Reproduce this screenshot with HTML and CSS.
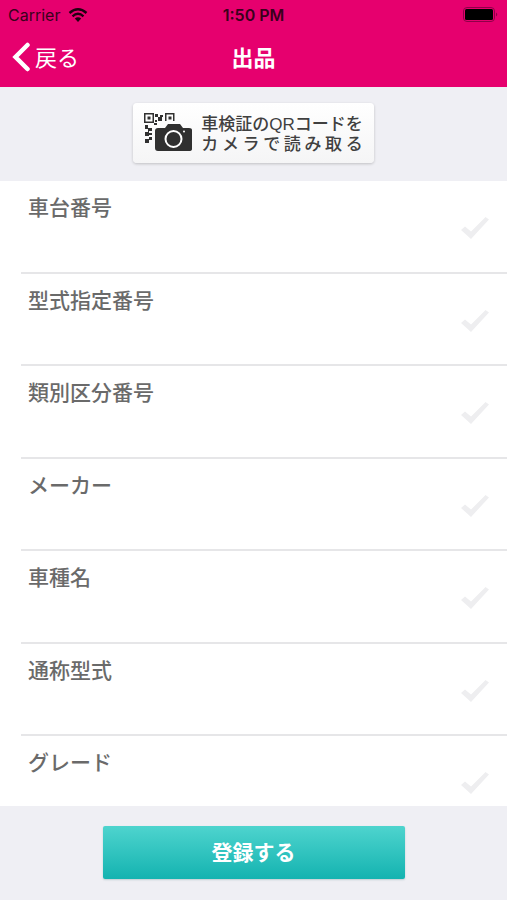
FILE: index.html
```
<!DOCTYPE html>
<html lang="ja">
<head>
    <meta charset="UTF-8">
    <title>出品</title>
    <meta name="viewport" content="width=device-width, initial-scale=1.0">
    <link rel="stylesheet" href="styles.css">
</head>
<body>
    <svg class="symbols" aria-hidden="true">
        <symbol id="check" viewBox="0 0 30 24">
            <path d="M1 14 L5 10.500 L11 15.500 L25.500 1 L29 3.500 L11 23 Z"/>
        </symbol>
    </svg>

    <header class="header">
        <div class="status-bar">
            <div class="carrier">
                <span>Carrier</span>
                <svg class="wifi" viewBox="0 0 20 14" aria-hidden="true">
                    <path d="M1.5 5 Q10 -2.5 18.5 5" fill="none" stroke="#1f0010" stroke-width="2.4"/>
                    <path d="M4.5 8.3 Q10 3.3 15.5 8.3" fill="none" stroke="#1f0010" stroke-width="2.3"/>
                    <path d="M6.8 10.6 Q10 7.8 13.2 10.6 L10 14 Z" fill="#1f0010"/>
                </svg>
            </div>
            <span class="clock">1:50 PM</span>
            <svg class="battery" viewBox="0 0 36 16" aria-hidden="true">
                <rect x="0.5" y="0.5" width="31" height="14" rx="3.5" fill="none" stroke="#8f0048"/>
                <rect x="2" y="2" width="28" height="11" rx="1.5" fill="#000"/>
                <path d="M33 5.5 Q35.5 7.5 33 9.5 Z" fill="#8f0048"/>
            </svg>
        </div>
        <nav class="nav-bar">
            <button type="button" class="back">
                <svg class="back-arrow" viewBox="0 0 18 30" aria-hidden="true">
                    <path d="M15.5 3 L3.500 15 L15.5 27" fill="none" stroke="#fff" stroke-width="4.500" stroke-linecap="round"/>
                </svg>
                <span class="nav-text">戻る</span>
            </button>
            <h1 class="title nav-text">出品</h1>
        </nav>
    </header>

    <section class="scan">
        <button type="button" class="scan-button">
            <svg class="scan-icon" viewBox="0 0 48 40" aria-hidden="true">
                <g fill="#303030">
                    <path fill-rule="evenodd" d="M0 0h10v10h-10z M1.5 1.5v7h7v-7z"/>
                    <rect x="3.500" y="3.500" width="3" height="3"/>
                    <path d="M21 8v-8h9.500v8h-1.500v-6.500h-6.500v6.500z"/>
                    <rect x="24.500" y="3.500" width="3" height="3"/>
                    <path d="M11 1h3v3h-3z M14 4h2v-2h3v2h-1v4h-4z"/>
                    <rect x="11" y="7" width="2" height="2"/>
                    <rect x="10" y="10" width="3" height="2"/>
                    <path d="M1 12h3v3h4v3h-3v2h3v2h-3v1h-4v-4h3v-3h-3z"/>
                    <path d="M5 24h3v3h-3v3h-4v-4h4z"/>
                    <path d="M14 15h7l3-4h12l3 4h6q3 0 3 2v19q0 2-3 2h-31q-3 0-3-3v-17q0-3 3-3z"/>
                </g>
                <circle cx="29.500" cy="26" r="8" fill="none" stroke="#fff" stroke-width="2"/>
                <circle cx="40" cy="18.500" r="1" fill="#fff"/>
            </svg>
            <span class="scan-text">
                <span class="scan-line">車検証のQRコードを</span>
                <span class="scan-line">カメラで読み取る</span>
            </span>
        </button>
    </section>

    <form class="fields" id="entry">
        <div class="field">
            <label for="shadai">車台番号</label>
            <input type="text" id="shadai" name="shadai">
            <svg class="check" aria-hidden="true"><use href="#check"/></svg>
        </div>
        <div class="field">
            <label for="katashiki">型式指定番号</label>
            <input type="text" id="katashiki" name="katashiki">
            <svg class="check" aria-hidden="true"><use href="#check"/></svg>
        </div>
        <div class="field">
            <label for="ruibetsu">類別区分番号</label>
            <input type="text" id="ruibetsu" name="ruibetsu">
            <svg class="check" aria-hidden="true"><use href="#check"/></svg>
        </div>
        <div class="field">
            <label for="maker">メーカー</label>
            <input type="text" id="maker" name="maker">
            <svg class="check" aria-hidden="true"><use href="#check"/></svg>
        </div>
        <div class="field">
            <label for="shashu">車種名</label>
            <input type="text" id="shashu" name="shashu">
            <svg class="check" aria-hidden="true"><use href="#check"/></svg>
        </div>
        <div class="field">
            <label for="tsusho">通称型式</label>
            <input type="text" id="tsusho" name="tsusho">
            <svg class="check" aria-hidden="true"><use href="#check"/></svg>
        </div>
        <div class="field">
            <label for="grade">グレード</label>
            <input type="text" id="grade" name="grade">
            <svg class="check" aria-hidden="true"><use href="#check"/></svg>
        </div>
    </form>

    <footer class="footer">
        <button type="submit" form="entry" class="submit">登録する</button>
    </footer>
</body>
</html>
```

FILE: styles.css
```
* {
    box-sizing: border-box;
}
body {
    display: flex;
    flex-direction: column;
    height: 100vh;
    margin: 0;
    font-family: "Noto Sans CJK JP", sans-serif;
    background: #fff;
}
button {
    font-family: inherit;
    border: none;
    cursor: pointer;
}
.symbols {
    display: none;
}
.header {
    flex: none;
    background: #e6006e;
}
.status-bar {
    display: grid;
    grid-template-columns: 1fr auto 1fr;
    align-items: center;
    height: 30px;
    padding: 0 8px;
    font-family: Inter, sans-serif;
    font-size: 16px;
    color: #3a001c;
}
.carrier {
    display: flex;
    align-items: center;
    gap: 8px;
}
.wifi {
    width: 20px;
    height: 14px;
}
.clock {
    font-weight: 600;
}
.battery {
    justify-self: end;
    width: 36px;
    height: 16px;
}
.nav-bar {
    display: grid;
    grid-template-columns: 1fr auto 1fr;
    align-items: center;
    height: 57px;
    padding: 0 12px 3px;
    color: #fff;
}
.nav-text {
    padding-bottom: 2px;
    font-size: 22px;
    line-height: 30px;
}
.back {
    display: flex;
    align-items: center;
    gap: 5px;
    padding: 0;
    background: none;
    color: #fff;
}
.back-arrow {
    width: 18px;
    height: 30px;
}
.title {
    margin: 0;
    font-weight: 700;
}
.scan {
    flex: none;
    display: flex;
    justify-content: center;
    padding: 16px 0 18px;
    background: #efeff4;
}
.scan-button {
    display: flex;
    align-items: center;
    gap: 9px;
    height: 60px;
    padding: 0 11px;
    border-radius: 4px;
    background: linear-gradient(#fff, #f5f5f6);
    box-shadow: 0 1px 3px rgba(0, 0, 0, 0.2);
    color: #404040;
}
.scan-icon {
    width: 48px;
    height: 40px;
}
.scan-text {
    padding-top: 4px;
    font-family: "Liberation Sans", "Noto Sans CJK JP", sans-serif;
    font-size: 17px;
    font-weight: 500;
    line-height: 20px;
}
.scan-line {
    display: block;
    text-align: justify;
    text-align-last: justify;
    text-justify: inter-character;
}
.fields {
    flex: 1;
    display: grid;
    grid-auto-rows: 14.8%;
    min-height: 0;
    padding-left: 21px;
    overflow: hidden;
}
.field {
    display: grid;
    grid-template-columns: 1fr auto;
    grid-template-rows: 36px 1fr;
    padding: 7px 17px 3px 7px;
    border-bottom: 2px solid #e6e6e8;
}
.field label {
    font-size: 21px;
    font-weight: 500;
    line-height: 36px;
    color: #6a6a6a;
}
.field input {
    grid-row: 2;
    min-width: 0;
    height: 36px;
    padding: 0;
    border: none;
    outline: none;
    background: none;
    font-size: 20px;
    color: #333;
}
.check {
    grid-column: 2;
    grid-row: 1 / 3;
    align-self: center;
    width: 30px;
    height: 24px;
    fill: #eeeef0;
}
.footer {
    flex: none;
    display: flex;
    justify-content: center;
    padding: 20px 0 21px;
    background: #efeff4;
}
.submit {
    width: 60%;
    max-width: 302px;
    height: 53px;
    padding: 0 0 4px;
    border-radius: 2px;
    background: linear-gradient(#4ed4ce, #14b3b0);
    box-shadow: 0 1px 2px rgba(0, 80, 80, 0.2);
    color: #fff;
    font-size: 21px;
    font-weight: 700;
}
```
